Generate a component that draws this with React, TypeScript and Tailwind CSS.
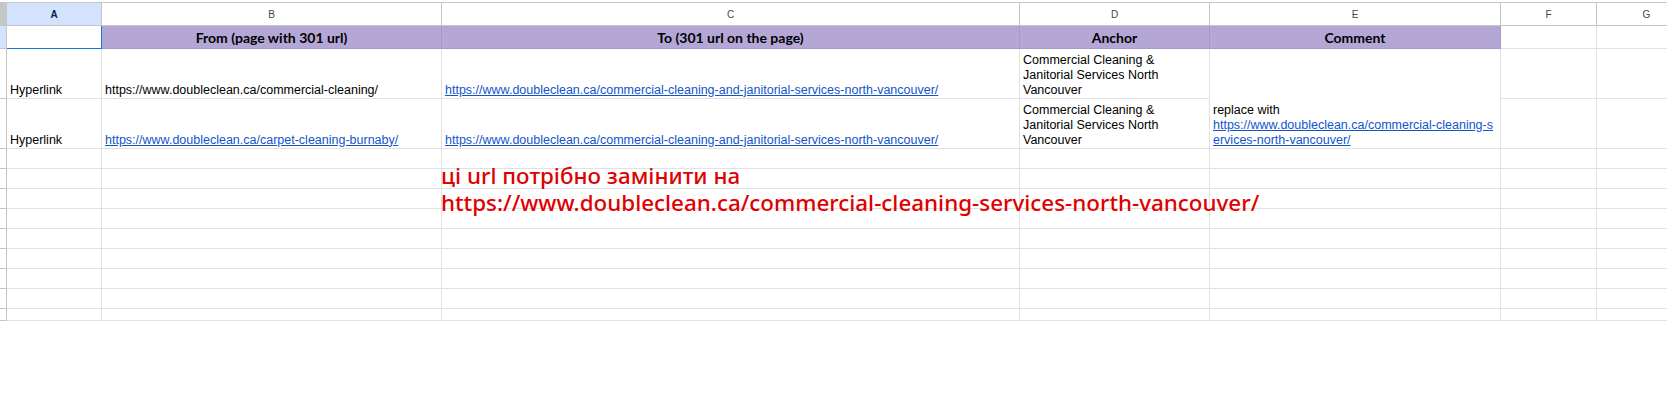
import React from "react";

const cellFont = "font-['Liberation_Sans',Arial,sans-serif] text-[12.5px] leading-[15px] text-black";
const grid = "border-r border-b border-[#e1e1e1]";
const link = "text-[#1155cc] underline decoration-[#1155cc]";

function Gutter({ blue = false }: { blue?: boolean }) {
  return <div className={`border-r border-b border-[#c4c7c5] ${blue ? "bg-[#d3e3fd]" : "bg-white"}`} />;
}

function Empty() {
  return <div className={grid} />;
}

function Text({ children, className = "" }: { children?: React.ReactNode; className?: string }) {
  return (
    <div className={`${grid} flex flex-col justify-end px-[3px] pb-[0.5px] overflow-hidden whitespace-nowrap ${cellFont} ${className}`}>
      {children}
    </div>
  );
}

function ColHead({ label, active = false }: { label: string; active?: boolean }) {
  return (
    <div
      className={`border-t border-r border-b border-[#c4c7c5] flex items-center justify-center font-['Liberation_Sans',Arial,sans-serif] text-[10px] ${
        active ? "bg-[#d3e3fd] font-bold text-[#041e49]" : "bg-white text-[#444746]"
      }`}
    >
      {label}
    </div>
  );
}

function Purple({ children }: { children: React.ReactNode }) {
  return (
    <div className="bg-[#b4a7d6] border-r border-b border-[#a699cb] flex items-end justify-center pb-[1px] font-['Lato',sans-serif] font-bold text-[14px] leading-[18px] text-black whitespace-nowrap">
      {children}
    </div>
  );
}

const TO_URL = "https://www.doubleclean.ca/commercial-cleaning-and-janitorial-services-north-vancouver/";

export default function App() {
  const emptyRows = Array.from({ length: 9 }, (_, i) => i);
  return (
    <div className="relative w-[1667px] h-[393px] overflow-hidden bg-white pt-[2px]">
      <div className="grid grid-cols-[7px_95px_340px_578px_190px_291px_96px_100px] grid-rows-[24px_23px_50px_50px_repeat(8,20px)_12px]">
        {/* column headers */}
        <div className="bg-[#c4c7c5] border-t border-r border-b border-[#c4c7c5]" />
        <ColHead label="A" active />
        <ColHead label="B" />
        <ColHead label="C" />
        <ColHead label="D" />
        <ColHead label="E" />
        <ColHead label="F" />
        <ColHead label="G" />

        {/* row 1 */}
        <Gutter blue />
        <div className="border-r border-b border-[#1a73e8] bg-white" />
        <Purple>From (page with 301 url)</Purple>
        <Purple>To (301 url on the page)</Purple>
        <Purple>Anchor</Purple>
        <Purple>Comment</Purple>
        <Empty />
        <Empty />

        {/* row 2 */}
        <Gutter />
        <Text>Hyperlink</Text>
        <Text>https://www.doubleclean.ca/commercial-cleaning/</Text>
        <Text>
          <span className={link}>{TO_URL}</span>
        </Text>
        <Text>
          <span>Commercial Cleaning &amp;</span>
          <span>Janitorial Services North</span>
          <span>Vancouver</span>
        </Text>
        <Text className="row-span-2">
          <span>replace with</span>
          <span className={link}>https://www.doubleclean.ca/commercial-cleaning-s</span>
          <span>
            <span className={link}>ervices-north-vancouver/</span>
          </span>
        </Text>
        <Empty />
        <Empty />

        {/* row 3 */}
        <Gutter />
        <Text>Hyperlink</Text>
        <Text>
          <span className={link}>https://www.doubleclean.ca/carpet-cleaning-burnaby/</span>
        </Text>
        <Text>
          <span className={link}>{TO_URL}</span>
        </Text>
        <Text>
          <span>Commercial Cleaning &amp;</span>
          <span>Janitorial Services North</span>
          <span>Vancouver</span>
        </Text>
        <Empty />
        <Empty />

        {/* empty rows */}
        {emptyRows.map((r) => (
          <React.Fragment key={r}>
            <Gutter />
            <Empty />
            <Empty />
            <Empty />
            <Empty />
            <Empty />
            <Empty />
            <Empty />
          </React.Fragment>
        ))}
      </div>

      {/* overlay note */}
      <div className="absolute left-[441px] top-[162px] font-['Noto_Sans',sans-serif] font-medium text-[22.4px] leading-[27px] text-[#e00000] whitespace-nowrap">
        <div>ці url потрібно замінити на</div>
        <div>https://www.doubleclean.ca/commercial-cleaning-services-north-vancouver/</div>
      </div>
    </div>
  );
}
